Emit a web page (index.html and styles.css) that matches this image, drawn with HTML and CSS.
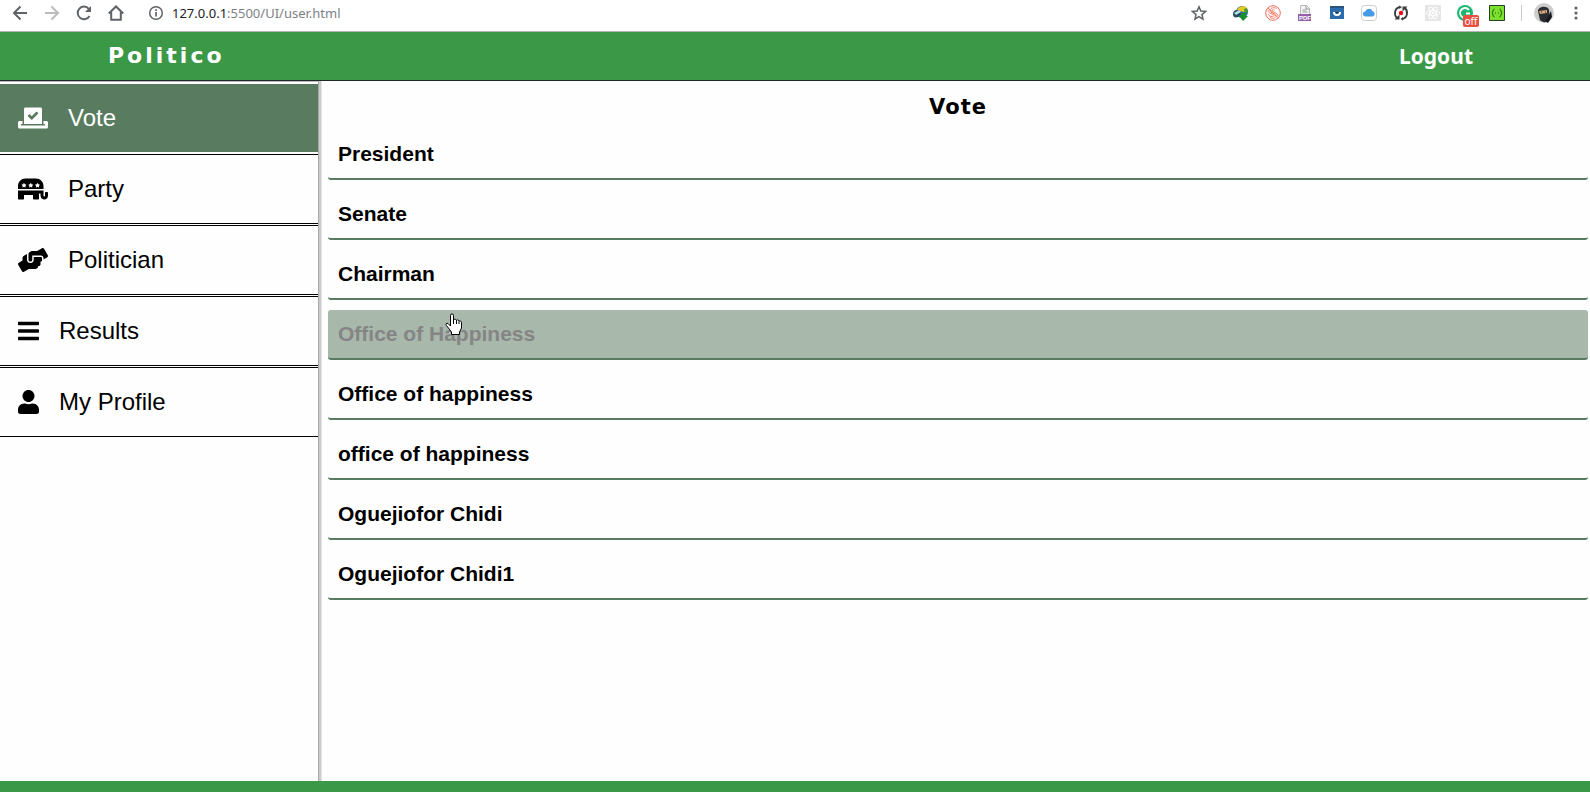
FILE: index.html
```html
<!DOCTYPE html>
<html lang="en">
<head>
<meta charset="utf-8">
<title>Politico</title>
<link rel="stylesheet" href="styles.css">
</head>
<body>
<div class="browser-bar">
  <div class="nav-buttons">
    <button class="icon-btn" type="button" aria-label="Back"><svg width="16" height="16" viewBox="0 0 16 16" fill="none" stroke="#5f6368" stroke-width="2"><path d="M15 8H2M8.500 1.500 2 8l6.500 6.500"/></svg></button>
    <button class="icon-btn" type="button" aria-label="Forward"><svg width="16" height="16" viewBox="0 0 16 16" fill="none" stroke="#babcbe" stroke-width="2"><path d="M1 8h13M7.500 1.500 14 8l-6.500 6.500"/></svg></button>
    <button class="icon-btn" type="button" aria-label="Reload"><svg width="16" height="16" viewBox="0 0 16 16" fill="none" stroke="#5f6368" stroke-width="2"><path d="M13.500 11A6.300 6.300 0 1 1 12.800 3.800L14 5"/><path d="M15 1v6H9z" fill="#5f6368" stroke="none"/></svg></button>
    <button class="icon-btn" type="button" aria-label="Home"><svg width="16" height="16" viewBox="0 0 16 16" fill="none" stroke="#5f6368" stroke-width="2"><path d="M.8 8.500 8 1.500l7.200 7M3.200 7v7.800h9.600V7"/></svg></button>
  </div>
  <button class="icon-btn info" type="button" aria-label="Site information"><svg width="16" height="16" viewBox="0 0 16 16"><circle cx="8" cy="8" r="6.300" fill="none" stroke="#5f6368" stroke-width="1.500"/><path d="M7.200 7h1.700v4.500H7.200zM7.200 4.300h1.700V6H7.200z" fill="#5f6368"/></svg></button>
  <p class="address"><span class="host">127.0.0.1</span>:5500/UI/user.html</p>
  <div class="extensions">
    <button class="icon-btn star" type="button" aria-label="Bookmark"><svg width="16" height="16" viewBox="0 0 16 16" fill="none" stroke="#5f6368" stroke-width="1.500"><path d="m8 1.800 1.800 4.300 4.700.4-3.500 3.100 1 4.500L8 11.700l-4 2.400 1-4.500-3.500-3.100 4.700-.4z"/></svg></button>
    <button class="icon-btn" type="button" aria-label="Download manager"><svg width="16" height="16" viewBox="0 0 16 16"><circle cx="9" cy="7" r="6" fill="#2b6fa4"/><path d="M4 5c1-3 6-5 9-3l2 3-4 2-4-1z" fill="#e9c820"/><path d="M11 4l3-1 1 4-3 1z" fill="#3d9b35"/><path d="M0 9c0-4 4-5 7-3l1 3-3 3c-3 1-5 0-5-3z" fill="#27475b"/><path d="m1 8 5-3 2 2-5 3z" fill="#b8dce8"/><path d="M8 8h5v3h2l-5 5-4-5h2z" fill="#17912b"/></svg></button>
    <button class="icon-btn" type="button" aria-label="Snippets"><svg width="16" height="16" viewBox="0 0 16 16" fill="none" stroke="#f36e5c"><circle cx="8" cy="8" r="7.300"/><path d="M11.500 3.500C9 1.800 5 3 5 5.500c0 3 6 2.500 6 5.500 0 2.500-4 3-6.500 1M9.500 5C8 4.300 7 4.700 7 5.500c0 1.500 6 2 6 5.500M3 9c1 3 6 3 6 1.500C9 9 3 9 3 5M3 3l10.500 10" stroke-width=".9"/></svg></button>
    <button class="icon-btn" type="button" aria-label="PDF"><svg width="16" height="16" viewBox="0 0 16 16"><path d="M3.500 9V.5h6l3 3V9" fill="#f4f4f4" stroke="#b8b8b8"/><path d="M9 .5V4h3.500M5.500 5h4M5.500 7h5" fill="none" stroke="#999"/><path d="M1 9h13v7H1z" fill="#9461aa"/><text class="pdf" x="2" y="15">PDF</text></svg></button>
    <button class="icon-btn" type="button" aria-label="Night reader"><svg width="16" height="16" viewBox="0 0 16 16"><path d="M1 1h14v13H1z" fill="#2c6caa"/><path d="M1 1h14v2H1z" fill="#285580"/><path d="M4 7h8a4 4 0 0 1-8 0z" fill="#fff"/><path d="M6 7h4a2 2 0 0 1-4 0z" fill="#163a5f"/></svg></button>
    <button class="icon-btn" type="button" aria-label="Cloud"><svg width="16" height="16" viewBox="0 0 16 16"><rect x=".5" y=".5" width="15" height="15" rx="3" fill="#fff" stroke="#ccc"/><path d="M4.500 11.500a2.500 2.500 0 0 1-.2-5 3.800 3.800 0 0 1 7.200-.2 2.700 2.700 0 0 1 .3 5.200z" fill="#459be8"/></svg></button>
    <button class="icon-btn" type="button" aria-label="Recorder"><svg width="16" height="16" viewBox="0 0 16 16"><g fill="none" stroke="#3c3c3c" stroke-width="1.800"><path d="M7 2C1.500 3 .5 9.500 4 13M9 14c5.500-1 6.500-7.500 3-11"/></g><path d="M1.500 14.500h5V9.500zM14.500 1.500h-5v5zM6 .5 9 2 6.500 4zM10 12v3.500L7.500 14z" fill="#3c3c3c"/><circle cx="8" cy="8" r="2.200" fill="#f20d0d"/></svg></button>
    <button class="icon-btn" type="button" aria-label="React tools"><svg width="16" height="16" viewBox="0 0 16 16"><path d="M0 0h16v16H0z" fill="#e6e6e6"/><g fill="none" stroke="#fff"><ellipse cx="8" cy="8" rx="6.500" ry="2.500"/><ellipse cx="8" cy="8" rx="6.500" ry="2.500" transform="rotate(60 8 8)"/><ellipse cx="8" cy="8" rx="6.500" ry="2.500" transform="rotate(120 8 8)"/></g><circle cx="8" cy="8" r="1.200" fill="#fff"/></svg></button>
    <button class="icon-btn badged" type="button" aria-label="Grammar checker, off"><svg width="16" height="16" viewBox="0 0 16 16"><circle cx="8" cy="8" r="8" fill="#1cb872"/><path d="M12 5A5 5 0 1 0 8 13M9 8.500h4" fill="none" stroke="#fff" stroke-width="1.800"/></svg><span class="badge">off</span></button>
    <button class="icon-btn" type="button" aria-label="JSON viewer"><svg width="16" height="16" viewBox="0 0 16 16"><path d="M.5.5h15v15H.5z" fill="#7ae22c" stroke="#263d26"/><path d="M5.500 4C3.500 4 4.500 7.500 3 8c1.500.5.5 4 2.500 4M10.500 4c2 0 1 3.500 2.500 4-1.500.5-.5 4-2.500 4" fill="none" stroke="#22551a"/><path d="M6 7.500h1v1H6zM9 7.500h1v1H9z" fill="#22551a"/></svg></button>
    <span class="divider"></span>
    <button class="icon-btn" type="button" aria-label="Profile"><svg width="20" height="20" viewBox="0 0 20 20"><circle cx="10" cy="10" r="10" fill="#ccc"/><path d="M4 8c0-5 10-6 11-1l1 9c-3 4-7 4-10 1z" fill="#292c30"/><path d="m5 8 8-1v3l-7 1z" fill="#dcaa79"/><path d="m14 14 3-6 1 6-4 6-3-2z" fill="#17191c"/><path d="M7 9h1M11 9h1" stroke="#222"/></svg></button>
    <button class="icon-btn menu" type="button" aria-label="Menu"><svg width="4" height="16" viewBox="0 0 4 16" fill="#5f6368"><circle cx="2" cy="3" r="1.600"/><circle cx="2" cy="8" r="1.600"/><circle cx="2" cy="13" r="1.600"/></svg></button>
  </div>
</div>

<header class="site-header">
  <a class="brand" href="#">Politico</a>
  <a class="logout" href="#">Logout</a>
</header>

<div class="layout">
  <nav class="sidebar">
    <a class="nav-item active" href="#"><svg width="30" height="24" viewBox="0 0 640 512"><path d="M608 320h-64v64h22.400c5.300 0 9.600 3.600 9.600 8v16c0 4.400-4.300 8-9.600 8H73.600c-5.300 0-9.600-3.600-9.600-8v-16c0-4.400 4.300-8 9.600-8H96v-64H32c-17.700 0-32 14.300-32 32v96c0 17.700 14.300 32 32 32h576c17.700 0 32-14.300 32-32v-96c0-17.700-14.300-32-32-32zm-96 64V64.300c0-17.900-14.500-32.300-32.300-32.300H160.400C142.500 32 128 46.500 128 64.300V384h384zM211.200 202l25.500-25.300c4.200-4.200 11-4.200 15.200.1l41.300 41.600 95.200-94.400c4.200-4.200 11-4.200 15.200.1l25.300 25.500c4.200 4.200 4.200 11-.1 15.200L300.500 292c-4.200 4.200-11 4.200-15.200-.1l-74.100-74.700c-4.300-4.200-4.200-11 0-15.200z"/></svg>Vote</a>
    <a class="nav-item" href="#"><svg width="30" height="24" viewBox="0 0 640 512"><path d="M544 192c0-88.400-71.600-160-160-160H160C71.600 32 0 103.600 0 192v64h544v-64zm-367.700-21.600l-19.800 19.300 4.700 27.300c.8 4.900-4.300 8.600-8.700 6.300L128 210.400l-24.500 12.900c-4.300 2.300-9.500-1.400-8.700-6.300l4.700-27.300-19.800-19.300c-3.600-3.500-1.600-9.500 3.300-10.200l27.400-4 12.200-24.800c2.200-4.500 8.600-4.400 10.700 0l12.200 24.800 27.400 4c5 .7 6.900 6.700 3.400 10.200zm144 0l-19.800 19.300 4.700 27.300c.8 4.900-4.300 8.600-8.700 6.300L272 210.400l-24.500 12.900c-4.300 2.300-9.500-1.400-8.700-6.300l4.700-27.300-19.800-19.300c-3.600-3.500-1.600-9.500 3.300-10.200l27.400-4 12.200-24.800c2.200-4.500 8.600-4.400 10.700 0l12.200 24.800 27.400 4c5 .7 6.900 6.700 3.400 10.200zm144 0l-19.800 19.300 4.700 27.300c.8 4.900-4.300 8.600-8.700 6.300L416 210.400l-24.500 12.900c-4.300 2.300-9.500-1.400-8.700-6.300l4.700-27.300-19.800-19.300c-3.600-3.500-1.600-9.500 3.300-10.200l27.400-4 12.200-24.800c2.200-4.500 8.600-4.400 10.700 0l12.200 24.800 27.400 4c5 .7 6.900 6.700 3.400 10.200zM624 320h-32c-8.800 0-16 7.200-16 16v64c0 8.800-7.200 16-16 16s-16-7.200-16-16V288H0v176c0 8.800 7.200 16 16 16h96c8.800 0 16-7.200 16-16v-80h192v80c0 8.800 7.200 16 16 16h96c8.800 0 16-7.200 16-16V352h32v43.300c0 41.800 30 80.100 71.600 84.300 47.800 4.900 88.400-32.700 88.400-79.600v-64c0-8.800-7.200-16-16-16z"/></svg>Party</a>
    <a class="nav-item" href="#"><svg width="30" height="24" viewBox="0 0 640 512"><path d="M488 192H336v56c0 39.700-32.300 72-72 72s-72-32.300-72-72V126.400l-64.900 39C107.800 176.900 96 197.800 96 220.200v47.300l-80 46.200C.7 322.500-4.600 342.100 4.300 357.400l80 138.600c8.800 15.300 28.400 20.500 43.700 11.700L231.400 448H368c35.300 0 64-28.700 64-64h16c17.700 0 32-14.300 32-32v-64h8c13.300 0 24-10.700 24-24v-48c0-13.300-10.700-24-24-24zm147.700-37.400L555.700 16C546.900.7 527.300-4.500 512 4.300L408.600 64H306.400c-12 0-23.700 3.400-33.900 9.700L239 94.600c-9.400 5.800-15 16.100-15 27.100V248c0 22.100 17.900 40 40 40s40-17.900 40-40v-88h184c30.900 0 56 25.100 56 56v28.500l80-46.200c15.300-8.900 20.500-28.400 11.700-43.700z"/></svg>Politician</a>
    <a class="nav-item" href="#"><svg width="21" height="24" viewBox="0 0 448 512"><path d="M16 132h416c8.800 0 16-7.200 16-16V76c0-8.800-7.200-16-16-16H16C7.200 60 0 67.200 0 76v40c0 8.800 7.200 16 16 16zm0 160h416c8.800 0 16-7.200 16-16v-40c0-8.800-7.200-16-16-16H16c-8.800 0-16 7.200-16 16v40c0 8.800 7.200 16 16 16zm0 160h416c8.800 0 16-7.200 16-16v-40c0-8.800-7.200-16-16-16H16c-8.800 0-16 7.200-16 16v40c0 8.800 7.200 16 16 16z"/></svg>Results</a>
    <a class="nav-item" href="#"><svg width="21" height="24" viewBox="0 0 448 512"><path d="M224 256c70.700 0 128-57.300 128-128S294.700 0 224 0 96 57.300 96 128s57.300 128 128 128zm89.600 32h-16.700c-22.200 10.200-46.900 16-72.900 16s-50.600-5.800-72.900-16h-16.700C60.200 288 0 348.200 0 422.400V464c0 26.500 21.500 48 48 48h352c26.500 0 48-21.500 48-48v-41.600c0-74.200-60.200-134.400-134.400-134.400z"/></svg>My Profile</a>
  </nav>
  <main class="content">
    <h1 class="title">Vote</h1>
    <div class="offices">
      <button class="office" type="button">President</button>
      <button class="office" type="button">Senate</button>
      <button class="office" type="button">Chairman</button>
      <button class="office hovered" type="button">Office of Happiness<svg class="pointer" width="17" height="23" viewBox="0 0 17 23"><path d="M5.500 13V2.500a1.500 1.500 0 0 1 3 0V7c0-1 3-1 3 .5 0-1 2.500-.7 2.500.8 0-.8 2.500-.6 2.500 1V15l-2 4v2.500h-8V19l-5-6.500c-1-1.500 0-3 1.500-2z" fill="#fff" stroke="#000"/><path d="M8.500 7v4M11.500 7.500V11M14 8.500V11" stroke="#000"/></svg></button>
      <button class="office" type="button">Office of happiness</button>
      <button class="office" type="button">office of happiness</button>
      <button class="office" type="button">Oguejiofor Chidi</button>
      <button class="office" type="button">Oguejiofor Chidi1</button>
    </div>
  </main>
</div>
<footer class="site-footer"></footer>
</body>
</html>
```

FILE: styles.css
```css
* {
  box-sizing: border-box;
}

body {
  margin: 0;
  min-height: 100vh;
  display: flex;
  flex-direction: column;
  background: #fefefe;
  color: #000;
  font-family: "Liberation Sans", Arial, sans-serif;
}

a {
  color: inherit;
  text-decoration: none;
}

button {
  margin: 0;
  padding: 0;
  border: 0;
  background: none;
  font: inherit;
  cursor: pointer;
}

/* Browser toolbar */
.browser-bar {
  height: 32px;
  padding: 0 12px 5px;
  display: flex;
  align-items: center;
  background: #fff;
  border-bottom: 1px solid #b6b4b6;
}

.nav-buttons {
  display: flex;
  gap: 16px;
}

.icon-btn {
  display: flex;
  align-items: center;
  justify-content: center;
}

.info {
  margin-left: 24px;
}

.address {
  margin: 0 0 0 8px;
  color: #7d8185;
  font: 13px/20px "Noto Sans", sans-serif;
}

.host {
  color: #202124;
}

.extensions {
  margin-left: auto;
  display: flex;
  align-items: center;
  gap: 16px;
}

.star {
  margin-right: 10px;
}

.pdf {
  fill: #fff;
  font: bold 6px "Liberation Sans", sans-serif;
}

.badged {
  position: relative;
}

.badge {
  position: absolute;
  left: 6px;
  top: 10px;
  width: 16px;
  border-radius: 2px;
  background: #ea4f42;
  color: #fff;
  font: 10px/12px "Noto Sans", sans-serif;
  text-align: center;
}

.divider {
  width: 1px;
  height: 16px;
  margin-right: -4px;
  background: #ccc;
}

.menu {
  margin-left: 4px;
}

/* Site header */
.site-header {
  height: 49px;
  padding: 0 117px 0 108px;
  display: flex;
  align-items: center;
  justify-content: space-between;
  background: #3b9847;
  border-bottom: 1px solid #1c2b28;
  color: #fff;
  font: bold 21px/28px "Noto Sans", sans-serif;
}

.brand {
  font: bold 22px/28px "DejaVu Sans", Verdana, sans-serif;
  letter-spacing: 3px;
}

/* Main layout */
.layout {
  flex: 1;
  display: flex;
}

.sidebar {
  width: 20%;
  box-sizing: content-box;
  padding-top: 1px;
  display: flex;
  flex-direction: column;
  gap: 1px;
  border-top: 1px solid #bbb;
  border-right: 1px solid #a8a8a8;
  box-shadow: 2px 0 #ccc, 3px 0 #e6e6e6;
}

.nav-item {
  height: 70px;
  padding: 0 18px;
  display: flex;
  align-items: center;
  gap: 20px;
  border: 1px solid #000;
  border-width: 1px 0;
  font-size: 24px;
}

.nav-item svg {
  fill: currentColor;
}

.active {
  border-color: transparent;
  background: #597c60;
  background-clip: padding-box;
  color: #fff;
}

.content {
  flex: 1;
  padding: 12px 2px 12px 9px;
}

.title {
  margin: 0 0 9px;
  font: bold 21px/28px "DejaVu Sans", Verdana, sans-serif;
  letter-spacing: 1px;
  text-align: center;
}

.offices {
  display: flex;
  flex-direction: column;
  gap: 10px;
}

.office {
  position: relative;
  height: 50px;
  padding: 0 10px;
  border-bottom: 2px solid #597c60;
  border-radius: 3px;
  font-size: 21px;
  font-weight: bold;
  text-align: left;
}

.hovered {
  background: #a8b8ab;
  color: #858585;
}

.pointer {
  position: absolute;
  left: 117px;
  top: 3px;
}

.site-footer {
  height: 11px;
  background: #3b9847;
}
```
